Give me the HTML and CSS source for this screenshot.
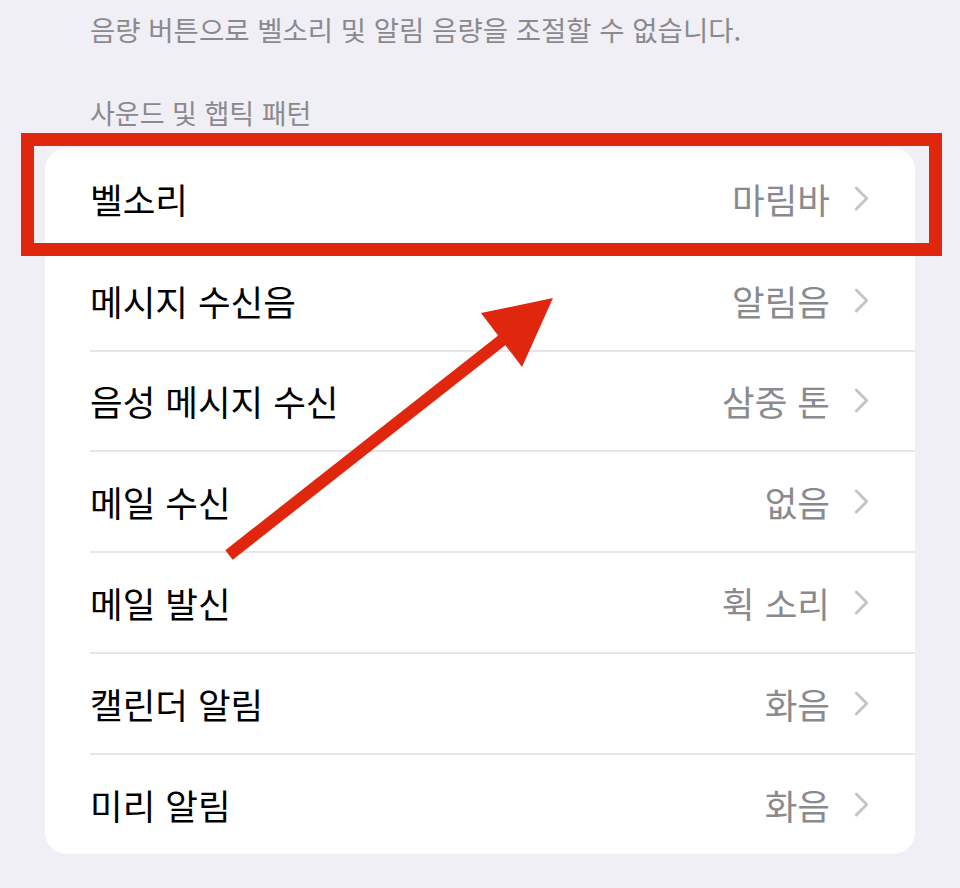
FILE: index.html
```html
<!DOCTYPE html>
<html lang="ko">
<head>
  <meta charset="UTF-8">
  <meta name="viewport" content="width=device-width, initial-scale=1.0">
  <title>사운드 및 햅틱</title>
  <link rel="stylesheet" href="styles.css">
</head>
<body>

<div class="page">
  <p class="note">음량 버튼으로 벨소리 및 알림 음량을 조절할 수 없습니다.</p>

  <h2 class="section-title">사운드 및 햅틱 패턴</h2>

  <!-- Sound list -->
  <div class="card">
    <div class="row"><div class="row-inner"><span class="label">벨소리</span><span class="value">마림바</span><svg class="chevron" viewBox="0 0 14 24"><path d="M2 2 L12 12 L2 22"/></svg></div></div>
    <div class="row"><div class="row-inner"><span class="label">메시지 수신음</span><span class="value">알림음</span><svg class="chevron" viewBox="0 0 14 24"><path d="M2 2 L12 12 L2 22"/></svg></div></div>
    <div class="row"><div class="row-inner"><span class="label">음성 메시지 수신</span><span class="value">삼중 톤</span><svg class="chevron" viewBox="0 0 14 24"><path d="M2 2 L12 12 L2 22"/></svg></div></div>
    <div class="row"><div class="row-inner"><span class="label">메일 수신</span><span class="value">없음</span><svg class="chevron" viewBox="0 0 14 24"><path d="M2 2 L12 12 L2 22"/></svg></div></div>
    <div class="row"><div class="row-inner"><span class="label">메일 발신</span><span class="value">휙 소리</span><svg class="chevron" viewBox="0 0 14 24"><path d="M2 2 L12 12 L2 22"/></svg></div></div>
    <div class="row"><div class="row-inner"><span class="label">캘린더 알림</span><span class="value">화음</span><svg class="chevron" viewBox="0 0 14 24"><path d="M2 2 L12 12 L2 22"/></svg></div></div>
    <div class="row"><div class="row-inner"><span class="label">미리 알림</span><span class="value">화음</span><svg class="chevron" viewBox="0 0 14 24"><path d="M2 2 L12 12 L2 22"/></svg></div></div>
  </div>

  <!-- Annotation overlay -->
  <div class="highlight-box"></div>
  <svg class="arrow" width="960" height="888" viewBox="0 0 960 888">
    <line x1="229" y1="555" x2="506" y2="337"/>
    <polygon points="481,313 553,298 522,367"/>
  </svg>
</div>

</body>
</html>
```

FILE: styles.css
```css
body {
  margin: 0;
  padding: 0;
  background-color: #f0eff5;
  font-family: "Noto Sans CJK KR", "Noto Sans", sans-serif;
}
.page {
  position: relative;
  width: 960px;
  height: 888px;
  overflow: hidden;
}
.note {
  margin: 0;
  padding: 11px 0 0 90px;
  font-size: 27.5px;
  line-height: 36px;
  color: #8a8a8e;
}
.section-title {
  margin: 48px 0 0;
  padding-left: 90px;
  font-size: 27px;
  font-weight: normal;
  line-height: 36px;
  color: #8a8a8e;
}
.card {
  margin: 17px 0 0 45px;
  width: 870px;
  background-color: #fff;
  border-radius: 22px;
  overflow: hidden;
}
.row {
  height: 100.8px;
  padding-left: 45px;
}
.row-inner {
  display: flex;
  align-items: center;
  height: 100%;
  padding-right: 46px;
  box-sizing: border-box;
}
.row + .row .row-inner {
  border-top: 2px solid #e5e5ea;
}
.label {
  flex: 1;
  font-size: 35.5px;
  color: #000;
}
.value {
  font-size: 35.5px;
  color: #8a8a8e;
}
.chevron {
  width: 15px;
  height: 25px;
  margin-left: 24px;
  fill: none;
  stroke: #c4c4c7;
  stroke-width: 2.8;
  stroke-linecap: round;
  stroke-linejoin: round;
}
.highlight-box {
  position: absolute;
  left: 21px;
  top: 133px;
  width: 921px;
  height: 123px;
  border: 13px solid #e0270d;
  box-sizing: border-box;
}
.arrow {
  position: absolute;
  left: 0;
  top: 0;
  pointer-events: none;
}
.arrow line {
  stroke: #e0270d;
  stroke-width: 12;
}
.arrow polygon {
  fill: #e0270d;
}
```
